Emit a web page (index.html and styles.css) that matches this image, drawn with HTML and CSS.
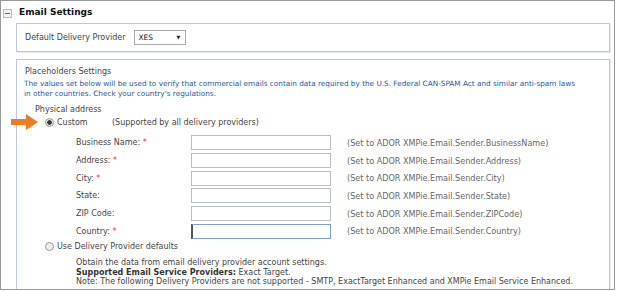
FILE: index.html
```html
<!DOCTYPE html>
<html lang="en">
<head>
  <meta charset="UTF-8">
  <title>Email Settings</title>
  <link rel="stylesheet" href="styles.css">
</head>
<body>
  <div class="panel">
    <div class="panel-title">
      <span class="toggle"></span>
      <span>Email Settings</span>
    </div>

    <!-- Delivery provider -->
    <div class="group provider">
      <span class="label">Default Delivery Provider</span>
      <div class="select">XES<span class="caret">&#9660;</span></div>
    </div>

    <!-- Placeholders -->
    <div class="group placeholders">
      <div class="group-title">Placeholders Settings</div>
      <p class="info">The values set below will be used to verify that commercial emails contain data required by the U.S. Federal CAN-SPAM Act and similar anti-spam laws in other countries. Check your country's regulations.</p>
      <div class="sub-title">Physical address</div>

      <div class="option">
        <span class="arrow"><svg width="28" height="16" viewBox="0 0 28 16"><path d="M0 5h15V0l12 8-12 8v-5H0z" fill="#f07b21"/></svg></span>
        <span class="radio checked"></span>
        <span class="option-name first">Custom</span>
        <span class="option-note">(Supported by all delivery providers)</span>
      </div>

      <div class="fields">
        <div class="field"><span class="label">Business Name: <i>*</i></span><input type="text"><span class="hint">(Set to ADOR XMPie.Email.Sender.BusinessName)</span></div>
        <div class="field"><span class="label">Address: <i>*</i></span><input type="text"><span class="hint">(Set to ADOR XMPie.Email.Sender.Address)</span></div>
        <div class="field"><span class="label">City: <i>*</i></span><input type="text"><span class="hint">(Set to ADOR XMPie.Email.Sender.City)</span></div>
        <div class="field"><span class="label">State:</span><input type="text"><span class="hint">(Set to ADOR XMPie.Email.Sender.State)</span></div>
        <div class="field"><span class="label">ZIP Code:</span><input type="text"><span class="hint">(Set to ADOR XMPie.Email.Sender.ZIPCode)</span></div>
        <div class="field"><span class="label">Country: <i>*</i></span><input type="text" class="focused"><span class="hint">(Set to ADOR XMPie.Email.Sender.Country)</span></div>
      </div>

      <div class="option second">
        <span class="radio"></span>
        <span class="option-name">Use Delivery Provider defaults</span>
      </div>
      <div class="defaults">
        <div>Obtain the data from email delivery provider account settings.</div>
        <div><b>Supported Email Service Providers:</b> Exact Target.</div>
        <div>Note: The following Delivery Providers are not supported - SMTP, ExactTarget Enhanced and XMPie Email Service Enhanced.</div>
      </div>
    </div>
  </div>
</body>
</html>
```

FILE: styles.css
```css
body {
  margin: 0;
  font-family: "DejaVu Sans", Verdana, sans-serif;
  background: #fff;
  color: #444;
}
.panel {
  width: 613px;
  height: 288px;
  border: 1px solid #9a9a9a;
  overflow: hidden;
}
.panel-title {
  display: flex;
  align-items: center;
  height: 22px;
  padding-left: 2px;
  font-weight: bold;
  font-size: 9px;
  color: #111;
}
.toggle {
  width: 7px;
  height: 7px;
  margin-right: 7px;
  margin-top: 3px;
  border: 1px solid #bbb;
  background: linear-gradient(#666, #666) center / 5px 1px no-repeat, #f2f2f2;
}
.group {
  margin: 0 4px 7px 15px;
  border: 1px solid #bcc6dd;
  box-shadow: 1px 1px 0 #e3e7f0;
}
.provider {
  display: flex;
  align-items: center;
  height: 27px;
  padding-left: 8px;
  font-size: 8px;
}
.provider .label {
  margin-right: 9px;
}
.select {
  position: relative;
  width: 47px;
  height: 13px;
  border: 1px solid #a9a9a9;
  font-size: 7.5px;
  line-height: 13px;
  padding-left: 3px;
  color: #222;
}
.caret {
  position: absolute;
  right: 5px;
  top: 0;
  font-size: 5px;
}
.placeholders {
  padding: 6px 8px 20px 8px;
  font-size: 8px;
}
.group-title {
  height: 11px;
  line-height: 11px;
}
.info {
  max-width: 556px;
  margin: 2px 0 0 -1px;
  color: #1c5a9a;
  font-size: 7.3px;
  line-height: 10px;
}
.sub-title {
  margin: 5px 0 0 10px;
  height: 12px;
  line-height: 12px;
}
.option {
  position: relative;
  display: flex;
  align-items: center;
  height: 12px;
  margin: 0 0 0 20px;
}
.arrow {
  position: absolute;
  left: -34px;
  top: -2px;
}
.radio {
  width: 7px;
  height: 7px;
  border: 1px solid #999;
  border-radius: 50%;
  background: #eee;
  margin-right: 3px;
}
.radio.checked {
  background: radial-gradient(circle, #333 0 2px, #e8e8e8 2.5px);
}
.option-name.first {
  width: 55px;
}
.fields {
  margin: 6px 0 0 51px;
}
.field {
  display: flex;
  align-items: center;
  height: 17.7px;
}
.field .label {
  width: 115px;
}
.field i {
  font-style: normal;
  color: #e33;
}
.field input {
  box-sizing: border-box;
  width: 140px;
  height: 15px;
  margin: 0 16px 0 0;
  border: 1px solid #b8bec6;
  padding: 0;
}
.field input.focused {
  border-color: #7e9fd0;
  border-left: 2px solid #555;
}
.hint {
  color: #666;
  font-size: 8.1px;
}
.option.second {
  margin-top: 0;
}
.defaults {
  margin: 6px 0 0 51px;
  line-height: 9.5px;
}
.defaults b {
  color: #333;
}
```
